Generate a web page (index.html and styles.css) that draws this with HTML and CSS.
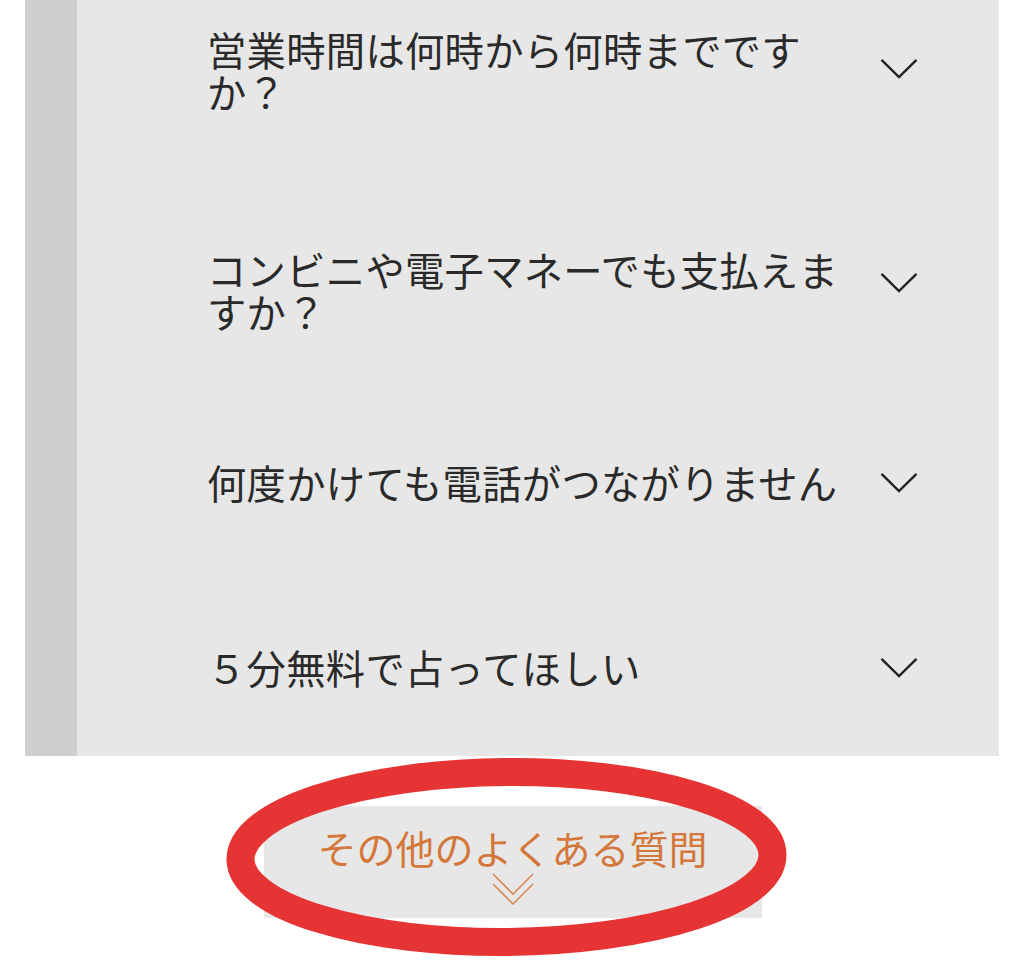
FILE: index.html
```html
<!DOCTYPE html>
<html lang="ja">
<head>
<meta charset="utf-8">
<title>よくある質問</title>
<link rel="stylesheet" href="styles.css">
</head>
<body>
<main class="page">
  <section class="faq">
    <div class="faq-item faq-item--first">
      <p class="faq-q">営業時間は何時から何時までですか？</p>
      <svg class="faq-chev" viewBox="0 0 38 21" aria-hidden="true"><path d="M1.5 1.8 L19 19 L36.5 1.8"/></svg>
    </div>
    <div class="faq-item faq-item--short-bottom">
      <p class="faq-q">コンビニや電子マネーでも支払えますか？</p>
      <svg class="faq-chev" viewBox="0 0 38 21" aria-hidden="true"><path d="M1.5 1.8 L19 19 L36.5 1.8"/></svg>
    </div>
    <div class="faq-item faq-item--tall-bottom">
      <p class="faq-q">何度かけても電話がつながりません</p>
      <svg class="faq-chev" viewBox="0 0 38 21" aria-hidden="true"><path d="M1.5 1.8 L19 19 L36.5 1.8"/></svg>
    </div>
    <div class="faq-item">
      <p class="faq-q">５分無料で占ってほしい</p>
      <svg class="faq-chev" viewBox="0 0 38 21" aria-hidden="true"><path d="M1.5 1.8 L19 19 L36.5 1.8"/></svg>
    </div>
  </section>
  <div class="more-wrap">
    <a class="more-btn" href="#">
      <span class="more-label">その他のよくある質問</span>
      <svg class="more-chev" viewBox="0 0 42 32" aria-hidden="true"><path d="M1 1 L21 21 L41 1"/><path d="M1 11 L21 31 L41 11"/></svg>
    </a>
    <svg class="mark" viewBox="0 0 600 221" aria-hidden="true"><ellipse cx="296.5" cy="113" rx="266" ry="85" transform="rotate(-0.5 296.5 113)"/></svg>
  </div>
</main>
</body>
</html>
```
FILE: styles.css
```css
html, body {
  margin: 0;
  padding: 0;
  background: #ffffff;
}
html {
  min-height: 966px;
}
body {
  min-height: 966px;
  font-family: "Noto Sans CJK JP", "Noto Sans", sans-serif;
  color: #2a2a2a;
}
.page {
  margin: 0 25px;
  padding-bottom: 48px;
}
.faq {
  background: #e7e7e7;
  border-left: 52px solid #cfcfcf;
}
.faq-item {
  display: flex;
  align-items: center;
  padding: 68px 81px 68px 130px;
}
.faq-item--first {
  padding-top: 28px;
}
.faq-item--first .faq-chev {
  margin-bottom: 4px;
}
.faq-item--short-bottom {
  padding-bottom: 61px;
}
.faq-item--short-bottom .faq-chev {
  margin-bottom: 16px;
}
.faq-item--tall-bottom {
  padding-bottom: 75px;
}
.faq-q {
  flex: 1;
  margin: 0;
  font-size: 39.3px;
  line-height: 42px;
  letter-spacing: 0.3px;
  font-weight: 400;
  color: #2a2a2a;
}
.faq-chev {
  flex: none;
  width: 38px;
  height: 21px;
  margin-left: 28px;
  fill: none;
  stroke: #222222;
  stroke-width: 2.4;
}
.more-wrap {
  position: relative;
  width: 498px;
  margin: 50px auto 0;
  padding-left: 1px;
}
.more-btn {
  display: flex;
  flex-direction: column;
  align-items: center;
  background: #e7e7e7;
  padding: 20px 0 13px;
  text-decoration: none;
}
.more-label {
  font-size: 39px;
  line-height: 43px;
  font-weight: 400;
  color: #d4773a;
}
.more-chev {
  width: 42px;
  height: 32px;
  margin-top: 4px;
  fill: none;
  stroke: #d8895a;
  stroke-width: 1.6;
}
.mark {
  position: absolute;
  left: -53px;
  top: -62px;
  width: 600px;
  height: 221px;
  pointer-events: none;
}
.mark ellipse {
  fill: none;
  stroke: #e63333;
  stroke-width: 28;
}
```
